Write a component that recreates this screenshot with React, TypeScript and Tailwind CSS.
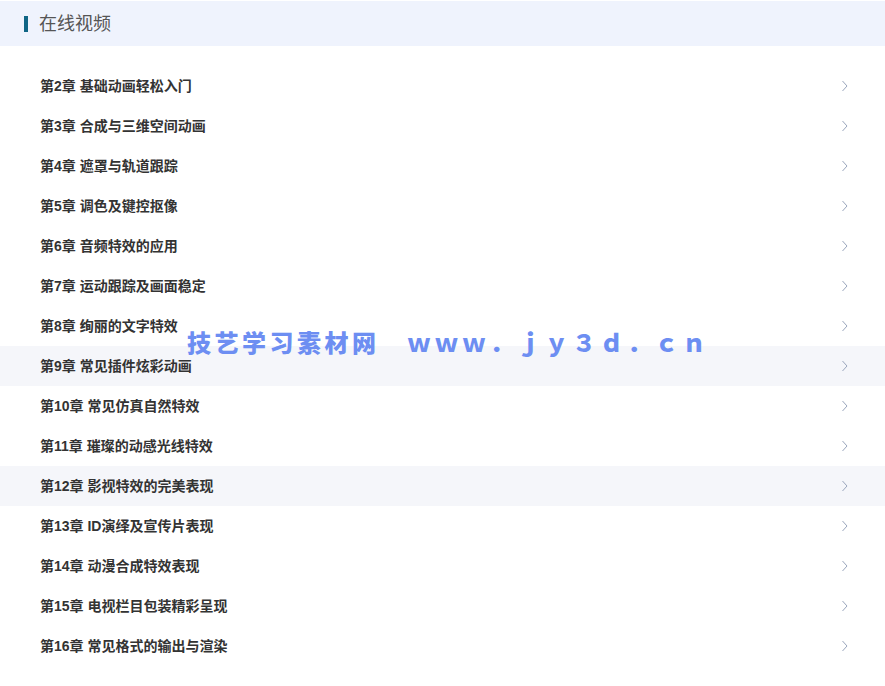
import React from "react";

const chapters = [
  "第2章 基础动画轻松入门",
  "第3章 合成与三维空间动画",
  "第4章 遮罩与轨道跟踪",
  "第5章 调色及键控抠像",
  "第6章 音频特效的应用",
  "第7章 运动跟踪及画面稳定",
  "第8章 绚丽的文字特效",
  "第9章 常见插件炫彩动画",
  "第10章 常见仿真自然特效",
  "第11章 璀璨的动感光线特效",
  "第12章 影视特效的完美表现",
  "第13章 ID演绎及宣传片表现",
  "第14章 动漫合成特效表现",
  "第15章 电视栏目包装精彩呈现",
  "第16章 常见格式的输出与渲染",
];

const highlighted = new Set([7, 10]);

function Chevron() {
  return (
    <svg width="8" height="12" viewBox="0 0 8 12" className="shrink-0">
      <polyline points="1.5,1 6,6 1.5,11" fill="none" stroke="#9aa6bd" strokeWidth="1" />
    </svg>
  );
}

export default function App() {
  return (
    <div
      className="relative w-[885px] h-[686px] bg-white overflow-hidden"
      style={{ fontFamily: '"Liberation Sans", "Noto Sans CJK SC", sans-serif' }}
    >
      <div className="mt-[1px] h-[45px] bg-[#eff3fd] flex items-center pl-[24px]">
        <div className="w-[4px] h-[16px] bg-[#0f6585]" />
        <span className="ml-[11px] text-[18px] text-[#555] leading-none">在线视频</span>
      </div>
      <div className="mt-[20px] flex flex-col">
        {chapters.map((c, i) => (
          <div
            key={c}
            className={`h-[40px] flex items-center justify-between pl-[40px] pr-[36px] ${
              highlighted.has(i) ? "bg-[#f5f6fa]" : ""
            }`}
          >
            <span className="text-[14px] font-bold text-[#333]">{c}</span>
            <Chevron />
          </div>
        ))}
      </div>
      <div
        className="absolute left-[187px] top-[326px] text-[24px] font-black text-[#6d8ef2] leading-[32px] tracking-[3.5px] whitespace-nowrap"
        style={{ fontFamily: '"Noto Sans CJK SC", sans-serif' }}
      >
        技艺学习素材网　ｗｗｗ．ｊｙ３ｄ．ｃｎ
      </div>
    </div>
  );
}
